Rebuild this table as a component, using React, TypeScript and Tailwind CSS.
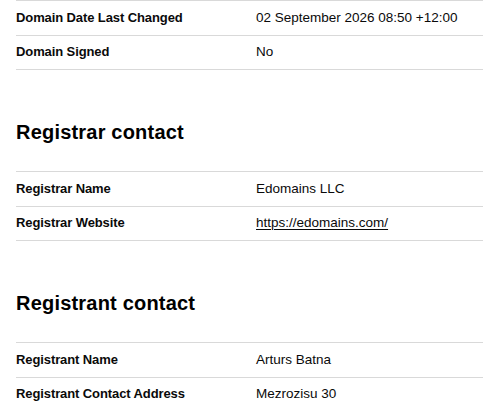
const font = { fontFamily: '"Liberation Sans", Arial, sans-serif' };

type Row = { label: string; value: string; href?: string };

const domainRows: Row[] = [
  { label: "Domain Date Last Changed", value: "02 September 2026 08:50 +12:00" },
  { label: "Domain Signed", value: "No" },
];

const registrarRows: Row[] = [
  { label: "Registrar Name", value: "Edomains LLC" },
  { label: "Registrar Website", value: "https://edomains.com/", href: "https://edomains.com/" },
];

const registrantRows: Row[] = [
  { label: "Registrant Name", value: "Arturs Batna" },
  { label: "Registrant Contact Address", value: "Mezrozisu 30" },
];

function InfoTable({ rows }: { rows: Row[] }) {
  return (
    <div className="border-t border-[#d9d9d9]">
      {rows.map((r) => (
        <div
          key={r.label}
          className="grid grid-cols-[240px_1fr] items-center h-[34.5px] border-b border-[#d9d9d9] text-[13px] leading-5 text-[#0a0a0a]"
        >
          <div className="font-bold tracking-[-0.1px]">{r.label}</div>
          <div className="text-[13.5px]">
            {r.href ? (
              <a href={r.href} className="underline underline-offset-2">
                {r.value}
              </a>
            ) : (
              r.value
            )}
          </div>
        </div>
      ))}
    </div>
  );
}

function Section({ title, rows }: { title: string; rows: Row[] }) {
  return (
    <section>
      <h2 className="mt-[48px] mb-[25px] text-[20px] leading-[28px] font-bold tracking-[0.2px] text-black">
        {title}
      </h2>
      <InfoTable rows={rows} />
    </section>
  );
}

export default function App() {
  return (
    <div className="bg-white min-h-screen pl-4 pr-[19px]" style={font}>
      <InfoTable rows={domainRows} />
      <Section title="Registrar contact" rows={registrarRows} />
      <Section title="Registrant contact" rows={registrantRows} />
    </div>
  );
}
